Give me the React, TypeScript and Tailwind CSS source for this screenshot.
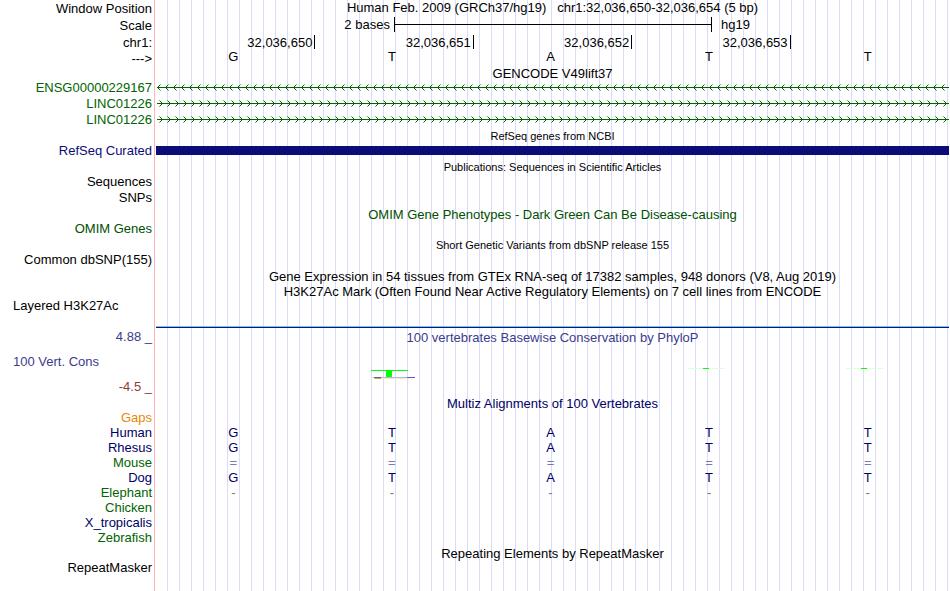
import React from 'react';

interface RowProps {
    label?: string;
    height: string;
    color?: string;
    align?: string;
    children?: React.ReactNode;
}

const NAVY = 'text-[#000064]';
const GREEN = 'text-[#006400]';
const DARK_GREEN = 'text-[#005000]';
const SLATE = 'text-[#3c3c8c]';

const Row: React.FC<RowProps> = ({ label, height, color = '', align = 'justify-end', children }) => (
    <div className={`flex ${height}`}>
        <div className={`flex w-[152px] shrink-0 items-center whitespace-pre ${align} ${color}`}>{label}</div>
        <div className="ml-1 mr-px flex min-w-0 flex-1 items-center">{children}</div>
    </div>
);

interface TitleProps {
    text: string;
    color?: string;
    size?: string;
    pad?: string;
}

const Title: React.FC<TitleProps> = ({ text, color = '', size = 'text-[13px]', pad = 'pt-0.5' }) => (
    <h2 className={`w-full whitespace-pre text-center ${pad} ${size} ${color}`}>{text}</h2>
);

const Bases: React.FC<{ bases: string; color?: string }> = ({ bases, color = '' }) => (
    <div className={`grid w-full grid-cols-5 text-center ${color}`}>
        {bases.split('').map((base, i) => (
            <span key={i} className="pr-1">{base}</span>
        ))}
    </div>
);

const Intron: React.FC<{ id: string; strand: '+' | '-' }> = ({ id, strand }) => (
    <svg className="h-4 w-full" shapeRendering="crispEdges">
        <defs>
            <pattern id={id} width="8" height="16" patternUnits="userSpaceOnUse" fill="#006400">
                {strand === '-' ? (
                    <>
                        <path d="M1 8h1v1h-1z M2 7h1v1h-1z M2 9h1v1h-1z M3 6h1v1h-1z M3 10h1v1h-1z" />
                        <path d="M4 5h1v1h-1z M4 11h1v1h-1z" opacity="0.5" />
                    </>
                ) : (
                    <>
                        <path d="M6 8h1v1h-1z M5 7h1v1h-1z M5 9h1v1h-1z M4 6h1v1h-1z M4 10h1v1h-1z" />
                        <path d="M3 5h1v1h-1z M3 11h1v1h-1z" opacity="0.5" />
                    </>
                )}
            </pattern>
        </defs>
        <rect x="1" y="8" width="100%" height="1" fill="#006400" />
        <rect width="100%" height="16" fill={`url(#${id})`} />
    </svg>
);

// phyloP wiggle, drawn per base
const Wiggle: React.FC = () => (
    <div className="grid w-full grid-cols-5">
        <span />
        <svg className="h-[33px] w-full overflow-visible" shapeRendering="crispEdges">
            <rect x="56" y="25" width="37" height="1" fill="#00ff00" />
            <rect x="71" y="26" width="6" height="6" fill="#00ff00" />
            <rect x="58" y="32" width="42" height="1" fill="#b4b4f0" />
            <rect x="59" y="32" width="7" height="1" fill="#64648c" />
            <rect x="92" y="32" width="8" height="1" fill="#5a5adc" />
            <rect x="59" y="33" width="36" height="1" fill="#f0f0b4" />
            <rect x="60" y="33" width="6" height="1" fill="#b4b43c" />
        </svg>
        <span />
        {[0, 1].map((i) => (
            <svg key={i} className="h-[33px] w-full" shapeRendering="crispEdges">
                <rect x="56" y="23" width="37" height="1" fill="#dcffdc" />
                <rect x="71" y="23" width="6" height="1" fill="#00ff00" />
            </svg>
        ))}
    </div>
);

const positions = ['32,036,650', '32,036,651', '32,036,652', '32,036,653'];

const species = [
    { name: 'Human', color: NAVY, bases: 'GTATT', baseColor: NAVY },
    { name: 'Rhesus', color: NAVY, bases: 'GTATT', baseColor: NAVY },
    { name: 'Mouse', color: GREEN, bases: '=====', baseColor: 'text-[#7878b4]' },
    { name: 'Dog', color: NAVY, bases: 'GTATT', baseColor: NAVY },
    { name: 'Elephant', color: GREEN, bases: '-----', baseColor: 'text-[#787878]' },
    { name: 'Chicken', color: GREEN, bases: '', baseColor: '' },
    { name: 'X_tropicalis', color: NAVY, bases: '', baseColor: '' },
    { name: 'Zebrafish', color: GREEN, bases: '', baseColor: '' },
];

export default function App() {
    return (
        <main className="relative min-h-screen overflow-hidden bg-white font-['Liberation_Sans',Arial,sans-serif] text-[13px] leading-[15px] text-black">
            {/* guidelines behind every track */}
            <div className="absolute inset-y-0 left-[154px] right-0 border-l border-[#ffb4b4] pl-px">
                <div className="h-full bg-[linear-gradient(to_right,transparent_11px,#dcdcfa_11px)] bg-[length:12px_100%]" />
            </div>
            <div className="relative">
                <Row label="Window Position" height="h-4">
                    <Title text={'Human Feb. 2009 (GRCh37/hg19)   chr1:32,036,650-32,036,654 (5 bp)'} pad="pb-0.5" />
                </Row>
                <Row label="Scale" height="h-[18px]">
                    <div className="grid w-full grid-cols-[3fr_4fr_3fr] items-center pb-0.5">
                        <span className="pr-1 text-right">2 bases</span>
                        <div className="-mr-px flex h-[15px] items-center border-x border-black">
                            <div className="h-px flex-1 bg-black" />
                        </div>
                        <span className="pl-2.5">hg19</span>
                    </div>
                </Row>
                <Row label="chr1:" height="h-4">
                    <div className="grid w-full grid-cols-5 pl-px">
                        {positions.map((position) => (
                            <div key={position} className="flex h-[14px] items-center justify-end border-r border-black pr-0.5">
                                {position}
                            </div>
                        ))}
                    </div>
                </Row>
                <Row label="--->" height="h-4">
                    <div className="w-full pb-1"><Bases bases="GTATT" /></div>
                </Row>
                <Row height="h-[13px]"><Title text="GENCODE V49lift37" /></Row>
                <Row label="ENSG00000229167" height="h-4" color={GREEN}><Intron id="ensg" strand="-" /></Row>
                <Row label="LINC01226" height="h-4" color={GREEN}><Intron id="linc-a" strand="+" /></Row>
                <Row label="LINC01226" height="h-4" color={GREEN}><Intron id="linc-b" strand="+" /></Row>
                <Row height="h-[15px]"><Title text="RefSeq genes from NCBI" size="text-[11px]" pad="pt-1" /></Row>
                <Row label="RefSeq Curated" height="h-4" color="text-[#0c0c78]">
                    <div className="h-[9px] w-full bg-[#0c0c78]" />
                </Row>
                <Row height="h-[15px]">
                    <Title text="Publications: Sequences in Scientific Articles" size="text-[11px]" pad="pt-1" />
                </Row>
                <Row label="Sequences" height="h-4" />
                <Row label="SNPs" height="h-4" />
                <Row height="h-[15px]">
                    <Title text="OMIM Gene Phenotypes - Dark Green Can Be Disease-causing" color={DARK_GREEN} pad="pt-1" />
                </Row>
                <Row label="OMIM Genes" height="h-4" color={DARK_GREEN} />
                <Row height="h-[15px]">
                    <Title text="Short Genetic Variants from dbSNP release 155" size="text-[11px]" pad="pt-1" />
                </Row>
                <Row label="Common dbSNP(155)" height="h-4" />
                <Row height="h-4">
                    <Title text="Gene Expression in 54 tissues from GTEx RNA-seq of 17382 samples, 948 donors (V8, Aug 2019)" />
                </Row>
                <Row height="h-[15px]">
                    <Title text="H3K27Ac Mark (Often Found Near Active Regulatory Elements) on 7 cell lines from ENCODE" />
                </Row>
                <Row label="Layered H3K27Ac" height="h-[14px]" align="pl-[13px]" />
                <Row height="h-4">
                    <div className="h-0.5 w-full self-end border-b border-[#141478] bg-[#64c8ff]" />
                </Row>
                <Row label="4.88 _" height="h-[17px]" color={SLATE}>
                    <Title text="100 vertebrates Basewise Conservation by PhyloP" color={SLATE} />
                </Row>
                <Row label="100 Vert. Cons" height="h-[33px]" color={SLATE} align="pl-[13px]"><Wiggle /></Row>
                <Row label="-4.5 _" height="h-4" color="text-[#8c3c3c]" />
                <Row height="h-4"><Title text="Multiz Alignments of 100 Vertebrates" color={NAVY} /></Row>
                <Row label="Gaps" height="h-[15px]" color="text-[#e68a00]" />
                {species.map((s) => (
                    <Row key={s.name} label={s.name} height="h-[15px]" color={s.color}>
                        <Bases bases={s.bases} color={s.baseColor} />
                    </Row>
                ))}
                <Row height="h-[15px]"><Title text="Repeating Elements by RepeatMasker" /></Row>
                <Row label="RepeatMasker" height="h-[15px]" />
            </div>
        </main>
    );
}
